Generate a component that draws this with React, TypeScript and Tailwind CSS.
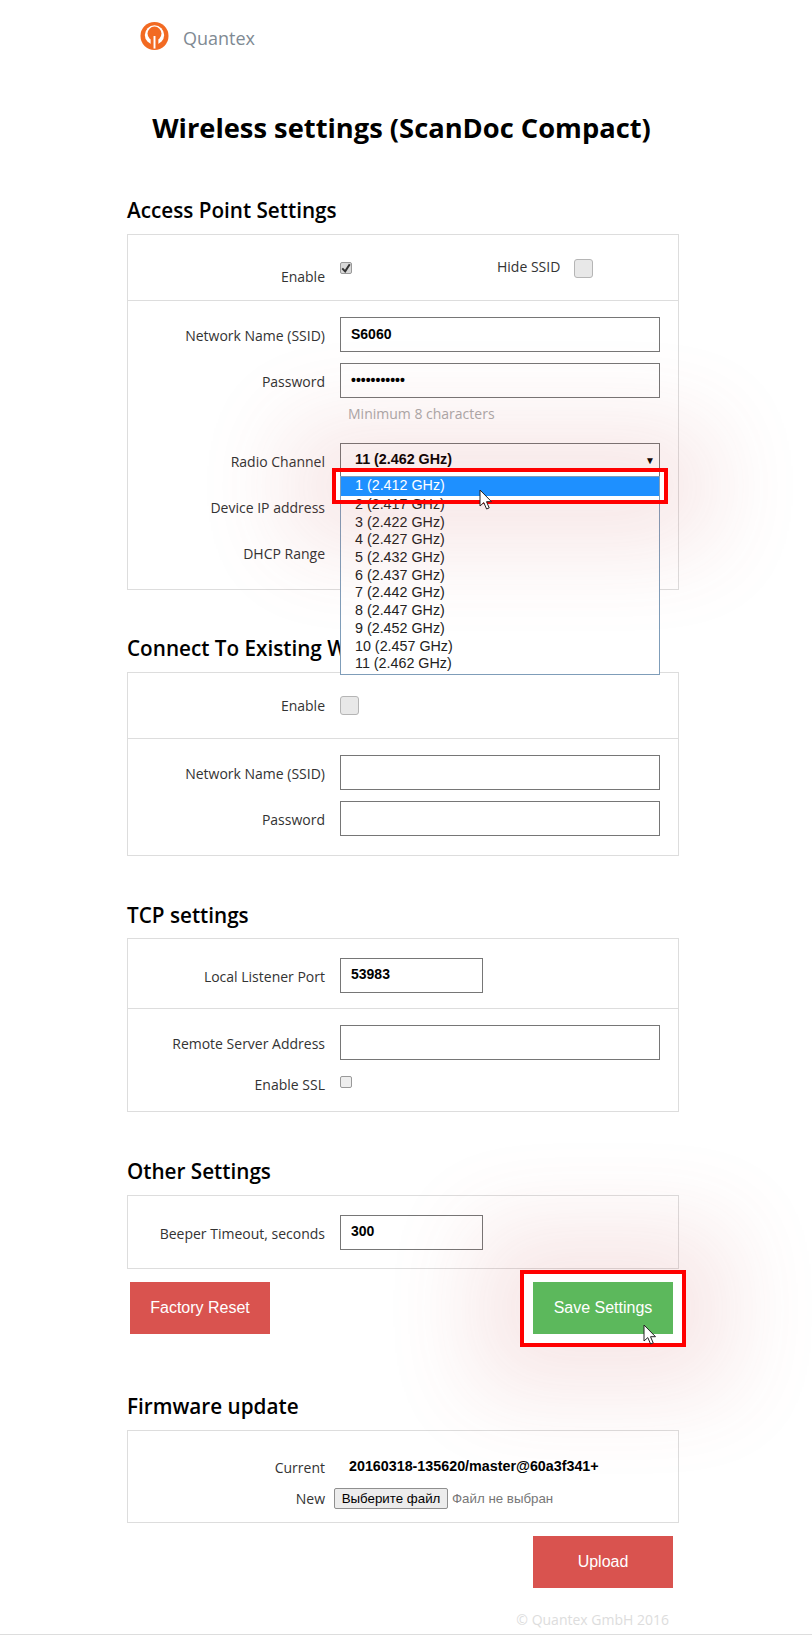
import React from "react";

const openSans = "font-['Open_Sans',sans-serif]";
const arial = "font-['Liberation_Sans',Arial,sans-serif]";

function Label({ children, className = "" }: { children: React.ReactNode; className?: string }) {
  return <div className={`w-[197px] shrink-0 text-right text-[14px] leading-[20px] text-[#333] ${className}`}>{children}</div>;
}

function TextInput({ value = "", type = "text", width = "w-[320px]" }: { value?: string; type?: string; width?: string }) {
  return (
    <input
      readOnly
      type={type}
      value={value}
      className={`${width} h-[35px] border border-[#767676] bg-white px-[10px] pb-[2px] text-[14px] font-bold text-black outline-none ${arial}`}
    />
  );
}

function Row({ label, children, className = "" }: { label: string; children: React.ReactNode; className?: string }) {
  return (
    <div className={`flex items-center gap-[15px] ${className}`}>
      <Label className="pt-[3px]">{label}</Label>
      {children}
    </div>
  );
}

function Card({ children }: { children: React.ReactNode }) {
  return <div className="border border-[#ddd] bg-white">{children}</div>;
}

function Heading({ children, className = "" }: { children: React.ReactNode; className?: string }) {
  return <h2 className={`h-[28px] text-[20.7px] font-semibold leading-[28px] text-black ${className}`}>{children}</h2>;
}

function BigCheck() {
  return <span className="block h-[19px] w-[19px] rounded-[3px] border border-[#b5b5b5] bg-[#e8e8e8]" />;
}

function SmallCheck({ checked = false }: { checked?: boolean }) {
  return (
    <span className={`flex h-[12px] w-[12px] items-center justify-center rounded-[2px] border border-[#999] ${checked ? "bg-[#d8d8d8]" : "bg-[#eee]"}`}>
      {checked && (
        <svg viewBox="0 0 12 12" className="h-[10px] w-[10px]">
          <path d="M1.5 6.5 L5 10 L10.5 1.5" fill="none" stroke="#333" strokeWidth="2.4" />
        </svg>
      )}
    </span>
  );
}

function Cursor({ className }: { className: string }) {
  return (
    <svg viewBox="0 0 14 22" className={`absolute h-[22px] w-[14px] ${className}`}>
      <path d="M1 1 L1 17 L4.8 13.6 L7.6 20 L10.2 18.9 L7.5 12.7 L12.5 12.7 Z" fill="#fff" stroke="#222" strokeWidth="1" />
    </svg>
  );
}

function Logo() {
  return (
    <svg viewBox="0 0 30 30" className="h-[30px] w-[29px]">
      <circle cx="15" cy="15" r="14.5" fill="#f26a22" />
      <circle cx="15" cy="14" r="10" fill="#fff" />
      <circle cx="15" cy="12.5" r="7.2" fill="#f26a22" />
      <path d="M11 16 L19 16 L19 27 L11 27 Z" fill="#f26a22" />
      <rect x="14" y="15" width="2" height="13" fill="#fff" />
    </svg>
  );
}

const channels = [
  "1 (2.412 GHz)",
  "2 (2.417 GHz)",
  "3 (2.422 GHz)",
  "4 (2.427 GHz)",
  "5 (2.432 GHz)",
  "6 (2.437 GHz)",
  "7 (2.442 GHz)",
  "8 (2.447 GHz)",
  "9 (2.452 GHz)",
  "10 (2.457 GHz)",
  "11 (2.462 GHz)",
];

const glow = "shadow-[0_0_90px_45px_rgba(190,70,70,0.13)]";

export default function App() {
  return (
    <div className={`relative h-[1635px] w-full overflow-hidden bg-white ${openSans}`}>
      <div className="ml-[127px] w-[552px]">
        <header className="flex h-[76px] items-start pt-[21px]">
          <div className="ml-[13px]"><Logo /></div>
          <span className="ml-[14px] mt-[4px] text-[18px] leading-[26px] text-[#808a93]">Quantex</span>
        </header>
        <h1 className="mb-[47px] mt-[31px] h-[42px] pr-[3px] text-center text-[27.3px] font-bold leading-[42px] text-black">
          Wireless settings (ScanDoc Compact)
        </h1>

        <Heading className="mb-[10px]">Access Point Settings</Heading>
        <Card>
          <div className="flex h-[66px] items-start gap-[15px] border-b border-[#ddd]">
            <Label className="mt-[32px]">Enable</Label>
            <div className="mt-[27px]"><SmallCheck checked /></div>
            <span className="ml-[130px] mt-[22px] text-[14px] leading-[20px] text-[#333]">Hide SSID</span>
            <div className="-ml-[1px] mt-[24px]"><BigCheck /></div>
          </div>
          <div className="px-0 pb-[19px] pt-[16px]">
            <Row label="Network Name (SSID)"><TextInput value="S6060" /></Row>
            <Row label="Password" className="mt-[11px]"><TextInput value="•••••••••••" /></Row>
            <div className="ml-[220px] mt-[6px] h-[20px] text-[14px] leading-[20px] text-[#aaa]">Minimum 8 characters</div>
            <Row label="Radio Channel" className="mt-[19px]">
              <div className="relative">
                <div className={`flex h-[34px] w-[320px] items-center justify-between border border-[#767676] bg-white pl-[14px] pr-[4px] text-[14.3px] font-bold text-black ${arial}`}>
                  <span>11 (2.462 GHz)</span>
                  <span className="text-[10px]">▼</span>
                </div>
                <ul className={`absolute left-0 top-[33px] z-10 w-[320px] border border-[#7f9db9] bg-white pb-[1px] text-[14.3px] leading-[17.7px] text-[#222] ${arial}`}>
                  {channels.map((c, i) => (
                    <li key={c} className={`pl-[14px] ${i === 0 ? "h-[19px] bg-[#1e90ff] text-white" : "h-[17.7px]"}`}>{c}</li>
                  ))}
                </ul>
              </div>
            </Row>
            <Row label="Device IP address" className="mt-[12px]"><TextInput /></Row>
            <Row label="DHCP Range" className="mt-[11px]"><TextInput /></Row>
          </div>
        </Card>

        <Heading className="mb-[10px] mt-[44px]">Connect To Existing Wireless Network</Heading>
        <Card>
          <div className="flex h-[66px] items-center gap-[15px] border-b border-[#ddd]">
            <Label>Enable</Label>
            <BigCheck />
          </div>
          <div className="pb-[19px] pt-[16px]">
            <Row label="Network Name (SSID)"><TextInput /></Row>
            <Row label="Password" className="mt-[11px]"><TextInput /></Row>
          </div>
        </Card>

        <Heading className="mb-[9px] mt-[45px]">TCP settings</Heading>
        <Card>
          <div className="flex h-[70px] items-center gap-[15px] border-b border-[#ddd] pt-[3px]">
            <Label className="pt-[3px]">Local Listener Port</Label>
            <TextInput value="53983" width="w-[143px]" />
          </div>
          <div className="pb-[16px] pt-[16px]">
            <Row label="Remote Server Address"><TextInput /></Row>
            <div className="mt-[12px] flex items-center gap-[15px]">
              <Label className="pt-[3px]">Enable SSL</Label>
              <div className="mb-[4px]"><SmallCheck /></div>
            </div>
          </div>
        </Card>

        <Heading className="mb-[10px] mt-[45px]">Other Settings</Heading>
        <Card>
          <div className="flex h-[72px] items-center gap-[15px]">
            <Label className="pt-[3px]">Beeper Timeout, seconds</Label>
            <TextInput value="300" width="w-[143px]" />
          </div>
        </Card>

        <div className={`mt-[13px] flex h-[52px] justify-between pl-[3px] pr-[6px] text-[16px] text-white ${arial}`}>
          <button className="w-[140px] bg-[#d9534f]">Factory Reset</button>
          <button className="w-[140px] bg-[#5cb85c]">Save Settings</button>
        </div>

        <Heading className="mb-[10px] mt-[58px]">Firmware update</Heading>
        <Card>
          <div className="h-[91px] pt-[27px]">
            <div className="flex items-center gap-[24px]">
              <Label>Current</Label>
              <span className={`-mt-[2px] text-[14.3px] font-bold text-black ${arial}`}>20160318-135620/master@60a3f341+</span>
            </div>
            <div className="mt-[10px] flex items-center gap-[9px]">
              <Label>New</Label>
              <span className={`flex items-center gap-[4px] text-[13.3px] text-[#777] ${arial}`}>
                <span className="flex h-[21px] w-[114px] items-center justify-center rounded-[2px] border border-[#8f8f8f] bg-[#ececec] text-black">Выберите файл</span>
                Файл не выбран
              </span>
            </div>
          </div>
        </Card>

        <div className={`mt-[13px] flex h-[52px] justify-end pr-[6px] text-[16px] text-white ${arial}`}>
          <button className="w-[140px] bg-[#d9534f]">Upload</button>
        </div>
        <div className="mt-[22px] pr-[10px] text-right text-[14px] leading-[20px] text-[#ddd]">© Quantex GmbH 2016</div>
      </div>
      <div className="absolute inset-x-0 bottom-0 h-px bg-[#ddd]" />

      <div className={`absolute left-[332px] top-[468px] z-20 h-[36px] w-[336px] border-[4px] border-[#ff0000] ${glow}`} />
      <Cursor className="left-[479px] top-[489px] z-30" />
      <div className={`absolute left-[520px] top-[1270px] z-20 h-[77px] w-[166px] border-[4px] border-[#ff0000] ${glow}`} />
      <Cursor className="left-[643px] top-[1324px] z-30" />
    </div>
  );
}
